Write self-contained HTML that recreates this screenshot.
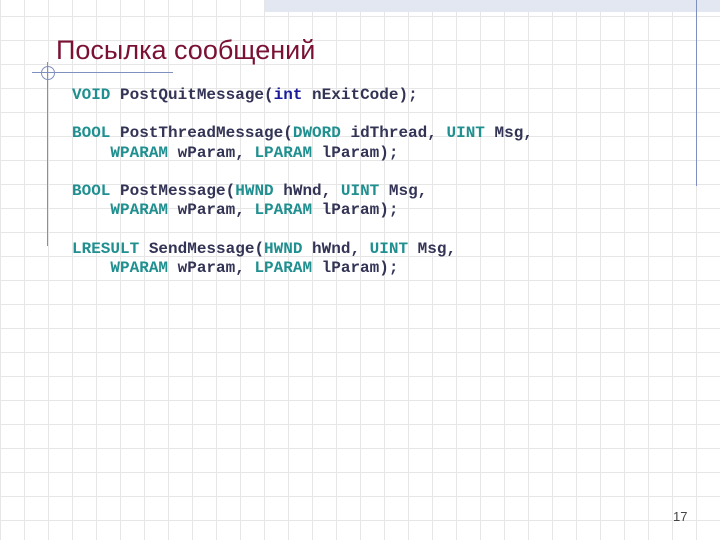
<!DOCTYPE html>
<html><head><meta charset="utf-8"><style>
body{margin:0;width:720px;height:540px;overflow:hidden;background:#fff;position:relative;
background-image:repeating-linear-gradient(90deg,transparent 0 23px,#e6e6e6 23px 24px),repeating-linear-gradient(0deg,transparent 0 23px,#e6e6e6 23px 24px);background-position:1px 4px}
.band{position:absolute;left:265px;top:0;width:455px;height:12px;background:#e2e7f1}
.vl{position:absolute;background:#7f8fbf;width:1px}
.hl{position:absolute;background:#7f8fbf;height:1px}
h1{position:absolute;left:56px;top:35px;margin:0;font:27px "Liberation Sans","DejaVu Sans",sans-serif;color:#7a1034}
pre{position:absolute;left:72px;top:86px;margin:0;font:bold 16px/19.2px "Liberation Mono",monospace;color:#333355}
.k{color:#1f8f8f}.i{color:#1a1a9a}
.n{position:absolute;left:673px;top:509px;font:13px "Liberation Sans",sans-serif;color:#444}
</style></head><body>
<div class="band"></div>
<div class="vl" style="left:696px;top:0;height:186px"></div>
<div class="vl" style="left:47px;top:62px;height:184px"></div>
<div class="hl" style="left:32px;top:72px;width:141px"></div>
<div style="position:absolute;left:41px;top:66px;width:12px;height:12px;border:1px solid #7f8fbf;border-radius:50%"></div>
<h1>Посылка сообщений</h1>
<pre><span class="k">VOID</span> PostQuitMessage(<span class="i">int</span> nExitCode);

<span class="k">BOOL</span> PostThreadMessage(<span class="k">DWORD</span> idThread, <span class="k">UINT</span> Msg,
    <span class="k">WPARAM</span> wParam, <span class="k">LPARAM</span> lParam);

<span class="k">BOOL</span> PostMessage(<span class="k">HWND</span> hWnd, <span class="k">UINT</span> Msg,
    <span class="k">WPARAM</span> wParam, <span class="k">LPARAM</span> lParam);

<span class="k">LRESULT</span> SendMessage(<span class="k">HWND</span> hWnd, <span class="k">UINT</span> Msg,
    <span class="k">WPARAM</span> wParam, <span class="k">LPARAM</span> lParam);</pre>
<div class="n">17</div>
</body></html>
